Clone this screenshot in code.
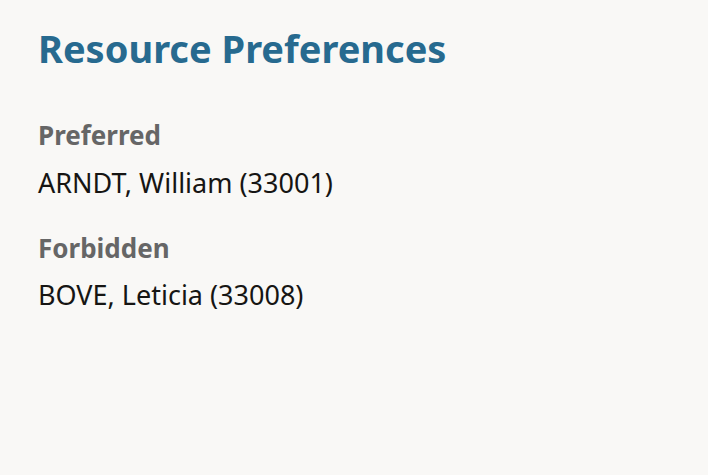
export default function App() {
  return (
    <div className="w-[708px] h-[475px] bg-[#f9f8f6] px-[38px] pt-[24px] font-['Noto_Sans',sans-serif]">
      <h1 className="text-[38px] font-bold text-[#276a8f] leading-[48px]">Resource Preferences</h1>
      <div className="mt-[47px]">
        <div className="text-[26px] font-bold text-[#666666] leading-[32px]">Preferred</div>
        <div className="mt-[16px] text-[27px] text-[#161513] leading-[32px]">ARNDT, William (33001)</div>
      </div>
      <div className="mt-[33px]">
        <div className="text-[26px] font-bold text-[#666666] leading-[32px]">Forbidden</div>
        <div className="mt-[15px] text-[27px] text-[#161513] leading-[32px]">BOVE, Leticia (33008)</div>
      </div>
    </div>
  )
}
